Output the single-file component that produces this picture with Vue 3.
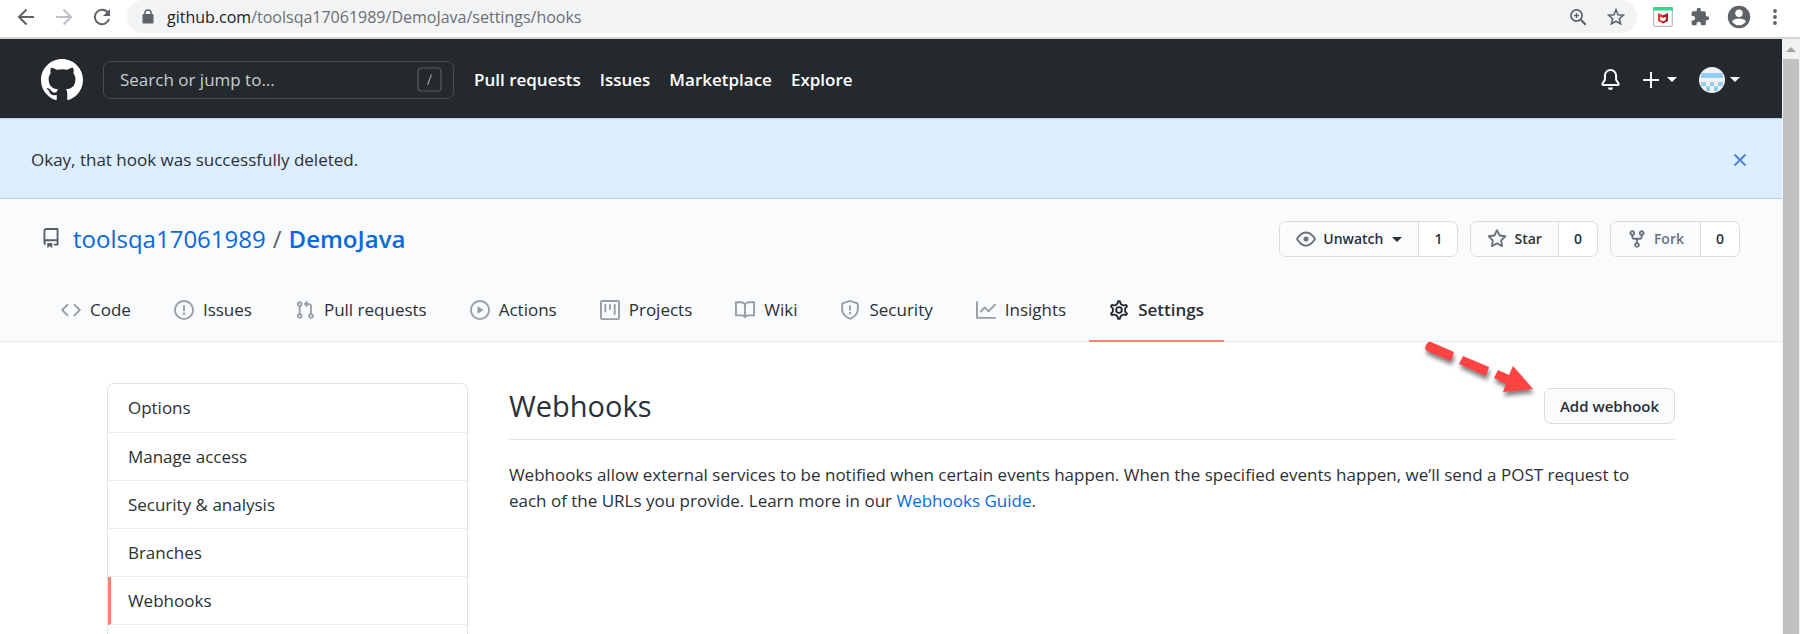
<script setup>
const headerLinks = ['Pull requests', 'Issues', 'Marketplace', 'Explore']

const tabs = [
  { label: 'Code', icon: 'M4.72 3.22a.75.75 0 011.06 1.06L2.06 8l3.72 3.72a.75.75 0 11-1.06 1.06L.47 8.53a.75.75 0 010-1.06l4.25-4.25zm6.56 0a.75.75 0 10-1.06 1.06L13.94 8l-3.72 3.72a.75.75 0 101.06 1.06l4.25-4.25a.75.75 0 000-1.06l-4.25-4.25z' },
  { label: 'Issues', icon: 'M8 1.5a6.5 6.5 0 100 13 6.5 6.5 0 000-13zM0 8a8 8 0 1116 0A8 8 0 010 8zm9 3a1 1 0 11-2 0 1 1 0 012 0zm-.25-6.25a.75.75 0 00-1.5 0v3.5a.75.75 0 001.5 0v-3.5z' },
  { label: 'Pull requests', icon: 'M7.177 3.073L9.573.677A.25.25 0 0110 .854v4.792a.25.25 0 01-.427.177L7.177 3.427a.25.25 0 010-.354zM3.75 2.5a.75.75 0 100 1.5.75.75 0 000-1.5zm-2.25.75a2.25 2.25 0 113 2.122v5.256a2.251 2.251 0 11-1.5 0V5.372A2.25 2.25 0 011.5 3.25zM11 2.5h-1V4h1a1 1 0 011 1v5.628a2.251 2.251 0 101.5 0V5A2.5 2.5 0 0011 2.5zm1 10.25a.75.75 0 111.5 0 .75.75 0 01-1.5 0zM3.75 12a.75.75 0 100 1.5.75.75 0 000-1.5z' },
  { label: 'Actions', icon: 'M1.5 8a6.5 6.5 0 1113 0 6.5 6.5 0 01-13 0zM8 0a8 8 0 100 16A8 8 0 008 0zM6.379 5.227A.25.25 0 006 5.442v5.117a.25.25 0 00.379.214l4.264-2.559a.25.25 0 000-.428L6.379 5.227z' },
  { label: 'Projects', icon: 'M1.75 0A1.75 1.75 0 000 1.75v12.5C0 15.216.784 16 1.75 16h12.5A1.75 1.75 0 0016 14.25V1.75A1.75 1.75 0 0014.25 0H1.75zM1.5 1.75a.25.25 0 01.25-.25h12.5a.25.25 0 01.25.25v12.5a.25.25 0 01-.25.25H1.75a.25.25 0 01-.25-.25V1.75zM11.75 3a.75.75 0 00-.75.75v7.5a.75.75 0 001.5 0v-7.5a.75.75 0 00-.75-.75zm-8.25.75a.75.75 0 011.5 0v5.5a.75.75 0 01-1.5 0v-5.5zM8 3a.75.75 0 00-.75.75v3.5a.75.75 0 001.5 0v-3.5A.75.75 0 008 3z' },
  { label: 'Wiki', icon: 'M0 1.75A.75.75 0 01.75 1h4.253c1.227 0 2.317.59 3 1.501A3.744 3.744 0 0111.006 1h4.245a.75.75 0 01.75.75v10.5a.75.75 0 01-.75.75h-4.507a2.25 2.25 0 00-1.591.659l-.622.621a.75.75 0 01-1.06 0l-.622-.621A2.25 2.25 0 005.258 13H.75a.75.75 0 01-.75-.75V1.75zm8.755 3a2.25 2.25 0 012.25-2.25H14.5v9h-3.757c-.71 0-1.4.201-1.992.572l.004-7.322zm-1.504 7.324l.004-5.073-.002-2.253A2.25 2.25 0 005.003 2.5H1.5v9h3.757a3.75 3.75 0 011.994.574z' },
  { label: 'Security', icon: 'M7.467.133a1.75 1.75 0 011.066 0l5.25 1.68A1.75 1.75 0 0115 3.48V7c0 1.566-.32 3.182-1.303 4.682-.983 1.498-2.585 2.813-5.032 3.855a1.7 1.7 0 01-1.33 0c-2.447-1.042-4.049-2.357-5.032-3.855C1.32 10.182 1 8.566 1 7V3.48a1.75 1.75 0 011.217-1.667l5.25-1.68zm.61 1.429a.25.25 0 00-.153 0l-5.25 1.68a.25.25 0 00-.174.238V7c0 1.358.275 2.666 1.057 3.86.784 1.194 2.121 2.34 4.366 3.297a.2.2 0 00.154 0c2.245-.956 3.582-2.104 4.366-3.298C13.225 9.666 13.5 8.36 13.5 7V3.48a.25.25 0 00-.174-.237l-5.25-1.68zM9 10.5a1 1 0 11-2 0 1 1 0 012 0zm-.25-5.75a.75.75 0 10-1.5 0v3a.75.75 0 001.5 0v-3z' },
  { label: 'Insights', icon: 'M1.5 1.75a.75.75 0 00-1.5 0v12.5c0 .414.336.75.75.75h14.5a.75.75 0 000-1.5H1.5V1.75zm14.28 2.53a.75.75 0 00-1.06-1.06L10 7.94 7.53 5.47a.75.75 0 00-1.06 0L3.22 8.72a.75.75 0 001.06 1.06L7 7.06l2.47 2.47a.75.75 0 001.06 0l5.25-5.25z' },
  { label: 'Settings', active: true },
]

const counters = [
  { label: 'Unwatch', count: 1, caret: true, icon: 'M1.679 7.932c.412-.621 1.242-1.75 2.366-2.717C5.175 4.242 6.527 3.5 8 3.5c1.473 0 2.824.742 3.955 1.715 1.124.967 1.954 2.096 2.366 2.717a.119.119 0 010 .136c-.412.621-1.242 1.75-2.366 2.717C10.825 11.758 9.473 12.5 8 12.5c-1.473 0-2.824-.742-3.955-1.715C2.92 9.818 2.09 8.69 1.679 8.068a.119.119 0 010-.136zM8 2c-1.981 0-3.67.992-4.933 2.078C1.797 5.169.88 6.423.43 7.1a1.619 1.619 0 000 1.798c.45.678 1.367 1.932 2.637 3.024C4.329 13.008 6.019 14 8 14c1.981 0 3.67-.992 4.933-2.078 1.27-1.091 2.187-2.345 2.637-3.023a1.619 1.619 0 000-1.798c-.45-.678-1.367-1.932-2.637-3.023C11.671 2.992 9.981 2 8 2zm0 8a2 2 0 100-4 2 2 0 000 4z' },
  { label: 'Star', count: 0, icon: 'M8 .25a.75.75 0 01.673.418l1.882 3.815 4.21.612a.75.75 0 01.416 1.279l-3.046 2.97.719 4.192a.75.75 0 01-1.088.791L8 12.347l-3.766 1.98a.75.75 0 01-1.088-.79l.72-4.194L.818 6.374a.75.75 0 01.416-1.28l4.21-.611L7.327.668A.75.75 0 018 .25zm0 2.445L6.615 5.5a.75.75 0 01-.564.41l-3.097.45 2.24 2.184a.75.75 0 01.216.664l-.528 3.084 2.769-1.456a.75.75 0 01.698 0l2.77 1.456-.53-3.084a.75.75 0 01.216-.664l2.24-2.183-3.096-.45a.75.75 0 01-.564-.41L8 2.694z' },
  { label: 'Fork', count: 0, muted: true, icon: 'M5 3.25a.75.75 0 11-1.5 0 .75.75 0 011.5 0zm0 2.122a2.25 2.25 0 10-1.5 0v.878A2.25 2.25 0 005.75 8.5h1.5v2.128a2.251 2.251 0 101.5 0V8.5h1.5a2.25 2.25 0 002.25-2.25v-.878a2.25 2.25 0 10-1.5 0v.878a.75.75 0 01-.75.75h-4.5A.75.75 0 015 6.25v-.878zm3.75 7.378a.75.75 0 11-1.5 0 .75.75 0 011.5 0zm3-8.75a.75.75 0 100-1.5.75.75 0 000 1.5z' },
]

const menu = ['Options', 'Manage access', 'Security & analysis', 'Branches', 'Webhooks']
</script>

<template>
  <div class="window">
    <div class="toolbar">
      <div class="history">
        <button class="tool" aria-label="Back">
          <svg width="18" height="18" viewBox="0 0 18 18" fill="none" stroke="#5f6368" stroke-width="2"><path d="M17 9H2.500M9.500 1.500L2 9l7.500 7.500" /></svg>
        </button>
        <button class="tool" aria-label="Forward">
          <svg width="18" height="18" viewBox="0 0 18 18" fill="none" stroke="#bdc1c6" stroke-width="2"><path d="M1 9h14.500M8.500 1.500L16 9l-7.500 7.500" /></svg>
        </button>
        <button class="tool" aria-label="Reload">
          <svg width="18" height="18" viewBox="0 0 18 18"><path d="M14.800 4.700A7.200 7.200 0 1 0 16 11" fill="none" stroke="#5f6368" stroke-width="2" /><path d="M17 1v7h-7z" fill="#5f6368" /></svg>
        </button>
      </div>
      <div class="address">
        <svg width="12" height="16" viewBox="0 0 12 16"><rect x="0.500" y="5" width="11" height="9.500" rx="1.200" fill="#5f6368" /><path d="M3 6V4a3 3 0 0 1 6 0v2" fill="none" stroke="#5f6368" stroke-width="1.500" /></svg>
        <span class="url"><span class="host">github.com</span>/toolsqa17061989/DemoJava/settings/hooks</span>
        <button class="tool" aria-label="Zoom">
          <svg width="18" height="18" viewBox="0 0 18 18" fill="none" stroke="#5f6368"><circle cx="7.500" cy="7.500" r="5.600" stroke-width="1.700" /><path d="M11.700 11.700l5 5" stroke-width="2.200" /><path d="M7.500 5v5M5 7.500h5" stroke-width="1.300" /></svg>
        </button>
        <button class="tool" aria-label="Bookmark">
          <svg width="18" height="18" viewBox="0 0 18 18" fill="none" stroke="#5f6368" stroke-width="1.600"><path d="M9 1.800l2.100 4.900 5.300.5-4 3.500 1.200 5.200L9 13.200l-4.600 2.700 1.200-5.200-4-3.500 5.300-.5z" /></svg>
        </button>
      </div>
      <button class="tool" aria-label="WebAdvisor">
        <svg width="20" height="20" viewBox="0 0 20 20"><rect x="0.700" y="0.700" width="18.600" height="18.600" rx="1.500" fill="#fff" stroke="#b4b7ba" stroke-width="1.200" /><path d="M0 1.200Q0 0 1.200 0h17.600Q20 0 20 1.200V3.500H0z" fill="#35d88a" /><path d="M5 6l5 2.300V11L7.200 9.700v3.200L10 14.300v2.200l-5-2.400z" fill="#e33a31" /><path d="M15 6l-5 2.300V11l2.800-1.300v3.200L10 14.300v2.200l5-2.400z" fill="#a31f24" /></svg>
      </button>
      <button class="tool" aria-label="Extensions">
        <svg width="20" height="20" viewBox="0 0 24 24" fill="#5f6368"><path d="M20.500 11H19V7c0-1.100-.9-2-2-2h-4V3.500a2.500 2.500 0 0 0-5 0V5H4c-1.100 0-2 .9-2 2v3.800h1.500a2.700 2.700 0 0 1 0 5.400H2V20c0 1.100.9 2 2 2h3.800v-1.500a2.700 2.700 0 0 1 5.400 0V22H17c1.100 0 2-.9 2-2v-4h1.500a2.500 2.500 0 0 0 0-5z" /></svg>
      </button>
      <button class="tool" aria-label="Profile">
        <svg width="24" height="24" viewBox="0 0 24 24"><circle cx="12" cy="12" r="11.200" fill="#5f6368" /><circle cx="12" cy="8.300" r="3.700" fill="#fff" /><path d="M5 16.400c1.400-2.100 4.400-2.900 7-2.900s5.600.8 7 2.900c-1.500 2.400-4.100 3.900-7 3.900s-5.500-1.500-7-3.900z" fill="#fff" /></svg>
      </button>
      <button class="tool more" aria-label="Menu">
        <svg width="6" height="18" viewBox="0 0 6 18" fill="#5f6368"><circle cx="3" cy="3" r="1.900" /><circle cx="3" cy="9" r="1.900" /><circle cx="3" cy="15" r="1.900" /></svg>
      </button>
    </div>

    <div class="viewport">
      <div class="page">
        <header class="header">
          <a class="logo" href="#" aria-label="Homepage">
            <svg width="42" height="42" viewBox="0 0 16 16" fill="#fff"><path d="M8 0C3.580 0 0 3.580 0 8c0 3.540 2.290 6.530 5.470 7.590.4.070.55-.17.55-.38 0-.19-.01-.82-.01-1.490-2.010.37-2.530-.49-2.690-.94-.09-.23-.48-.94-.82-1.130-.28-.15-.68-.52-.01-.53.63-.01 1.080.58 1.230.82.72 1.210 1.870.87 2.330.66.070-.52.28-.87.51-1.070-1.780-.2-3.640-.89-3.640-3.950 0-.87.31-1.590.82-2.150-.08-.2-.36-1.020.08-2.120 0 0 .67-.21 2.200.82.64-.18 1.320-.27 2-.27s1.360.09 2 .27c1.530-1.040 2.200-.82 2.200-.82.44 1.100.16 1.920.08 2.120.51.56.82 1.270.82 2.150 0 3.070-1.870 3.750-3.650 3.950.29.25.54.73.54 1.480 0 1.070-.01 1.930-.01 2.200 0 .21.15.46.55.38A8.013 8.013 0 0 0 16 8c0-4.420-3.580-8-8-8z" /></svg>
          </a>
          <div class="search">
            <input type="text" placeholder="Search or jump to..." aria-label="Search or jump to" />
            <svg width="25" height="25" viewBox="0 0 25 25" fill="none" stroke="#6a737d" stroke-width="1.200"><rect x="1" y="1" width="23" height="23" rx="3.500" stroke-opacity=".7" /><path d="M14.500 7.500l-4 10.500" stroke="#959da5" /></svg>
          </div>
          <nav class="links">
            <a v-for="l in headerLinks" :key="l" href="#">{{ l }}</a>
          </nav>
          <button class="icon-button" aria-label="Notifications">
            <svg width="21" height="21" viewBox="0 0 16 16" fill="#fff"><path d="M8 16a2 2 0 001.985-1.750c.017-.137-.097-.25-.235-.25h-3.500c-.138 0-.252.113-.235.250A2 2 0 008 16z" /><path fill-rule="evenodd" d="M8 1.500A3.500 3.500 0 004.500 5v2.947c0 .346-.102.683-.294.970l-1.703 2.556a.018.018 0 00-.003.010l.001.006c0 .002.002.004.004.006a.017.017 0 00.006.004l.007.001h10.964l.007-.001a.016.016 0 00.006-.004.016.016 0 00.004-.006l.001-.007a.017.017 0 00-.003-.010l-1.703-2.554a1.750 1.750 0 01-.294-.970V5A3.500 3.500 0 008 1.500zM3 5a5 5 0 0110 0v2.947c0 .050.015.098.042.139l1.703 2.555A1.518 1.518 0 0113.482 13H2.518a1.518 1.518 0 01-1.263-2.360l1.703-2.554A.25.25 0 003 7.947V5z" /></svg>
          </button>
          <button class="icon-button" aria-label="Create new">
            <svg width="16" height="16" viewBox="0 0 16 16" stroke="#fff" stroke-width="1.900"><path d="M8 0v16M0 8h16" /></svg>
            <i class="caret"></i>
          </button>
          <button class="icon-button account" aria-label="Account">
            <svg width="26" height="26" viewBox="0 0 26 26">
              <clipPath id="round"><circle cx="13" cy="13" r="13" /></clipPath>
              <g clip-path="url(#round)">
                <path fill="#f0f0f0" d="M0 0h26v26H0z" />
                <path fill="#99cdf3" d="M2 6h22v5H2zM2 15h5v4H2zM11 15h4v4h-4zM19 15h5v4h-5zM7 19h4v5H7zM15 19h4v5h-4z" />
                <path d="M4 9.200h18" stroke="#55d4b8" stroke-width="1" stroke-dasharray="1 1.500" />
                <path fill="#45d9a8" d="M8 21h2v1H8zM16 21h2v1h-2z" />
              </g>
            </svg>
            <i class="caret"></i>
          </button>
        </header>

        <div class="flash">
          <span>Okay, that hook was successfully deleted.</span>
          <button aria-label="Dismiss">
            <svg width="14" height="14" viewBox="0 0 14 14" stroke="#4f81cf" stroke-width="1.900" stroke-linecap="round"><path d="M2 2l10 10M12 2L2 12" /></svg>
          </button>
        </div>

        <div class="pagehead">
          <div class="repo">
            <svg class="book" width="20" height="20" viewBox="0 0 16 16" fill="#57606a"><path fill-rule="evenodd" d="M2 2.500A2.500 2.500 0 014.500 0h8.750a.75.75 0 01.75.75v12.500a.75.75 0 01-.75.75h-2.500a.75.75 0 110-1.500h1.750v-2h-8a1 1 0 00-.714 1.700.75.75 0 01-1.072 1.050A2.495 2.495 0 012 11.500v-9zm10.500-1V9h-8c-.356 0-.694.074-1 .208V2.500a1 1 0 011-1h8zM5 12.250v3.250a.25.25 0 00.4.2l1.450-1.087a.25.25 0 01.3 0L8.600 15.700a.25.25 0 00.4-.2v-3.250a.25.25 0 00-.25-.25h-3.500a.25.25 0 00-.25.25z" /></svg>
            <h1><a href="#">toolsqa17061989</a><span>/</span><a class="name" href="#">DemoJava</a></h1>
            <ul class="counters">
              <li v-for="c in counters" :key="c.label">
                <button :class="{ muted: c.muted }">
                  <svg width="20" height="20" viewBox="0 0 16 16"><path fill-rule="evenodd" :d="c.icon" /></svg>
                  <span>{{ c.label }}</span>
                  <i v-if="c.caret" class="caret"></i>
                </button>
                <a href="#">{{ c.count }}</a>
              </li>
            </ul>
          </div>
          <nav class="tabs">
            <a v-for="t in tabs" :key="t.label" href="#" :class="{ active: t.active }">
              <svg v-if="t.icon" width="20" height="20" viewBox="0 0 16 16"><path fill-rule="evenodd" :d="t.icon" /></svg>
              <svg v-else class="gear" width="20" height="20" viewBox="0.6 0.6 14.8 14.8">
                <path d="M7.429 1.525a6.593 6.593 0 011.142 0c.036.003.108.036.137.146l.289 1.105c.147.56.55.967.997 1.189.174.086.341.183.501.29.417.278.97.423 1.53.27l1.102-.303c.11-.03.175.016.195.046.219.31.41.641.573.989.014.031.022.11-.059.19l-.815.806c-.411.406-.562.957-.53 1.456a4.588 4.588 0 010 .582c-.032.499.119 1.05.53 1.456l.815.806c.08.08.073.159.059.19a6.494 6.494 0 01-.573.99c-.02.029-.086.074-.195.045l-1.103-.303c-.559-.153-1.112-.008-1.529.27-.16.107-.327.204-.5.29-.449.222-.851.628-.998 1.189l-.289 1.105c-.029.11-.101.143-.137.146a6.613 6.613 0 01-1.142 0c-.036-.003-.108-.037-.137-.146l-.289-1.105c-.147-.56-.55-.967-.997-1.189a4.502 4.502 0 01-.501-.29c-.417-.278-.97-.423-1.53-.27l-1.102.303c-.11.03-.175-.016-.195-.046a6.492 6.492 0 01-.573-.989c-.014-.031-.022-.11.059-.19l.815-.806c.411-.406.562-.957.53-1.456a4.587 4.587 0 010-.582c.032-.499-.119-1.05-.53-1.456l-.815-.806c-.08-.08-.073-.159-.059-.19a6.44 6.44 0 01.573-.99c.02-.029.086-.075.195-.045l1.103.303c.559.153 1.112.008 1.529-.27.16-.107.327-.204.5-.29.449-.222.851-.628.998-1.189l.289-1.105c.029-.11.101-.143.137-.146z" />
                <circle cx="8" cy="8" r="2.100" />
              </svg>
              <span>{{ t.label }}</span>
            </a>
          </nav>
        </div>

        <div class="content">
          <nav class="menu" aria-label="Repository settings">
            <a v-for="m in menu" :key="m" href="#" :class="{ current: m === 'Webhooks' }">{{ m }}</a>
          </nav>
          <main>
            <div class="subhead">
              <h2>Webhooks</h2>
              <button>Add webhook</button>
              <svg class="pointer" width="120" height="64" viewBox="0 0 120 64" fill="#ff4342">
                <path d="M10 6L33 16l-3 9L6 15Q3 13 5 9t5-3zM42 20l26 11-3 9-27-12zM77 34l11 5 4-9 20 23-30 3 3-8-12-6z" />
              </svg>
            </div>
            <p>Webhooks allow external services to be notified when certain events happen. When the specified events happen, we’ll send a POST request to each of the URLs you provide. Learn more in our <a href="#">Webhooks Guide</a>.</p>
          </main>
        </div>
      </div>
      <div class="scrollbar" aria-hidden="true">
        <svg width="18" height="20" viewBox="0 0 18 20"><path d="M9 8l5 5H4z" fill="#a3a3a3" /></svg>
        <div class="thumb"></div>
      </div>
    </div>
  </div>
</template>

<style>
body { margin: 0; }
</style>

<style scoped>
* { box-sizing: border-box; }
.window {
  height: 100vh;
  display: flex;
  flex-direction: column;
  overflow: hidden;
  background: #fff;
  color: #2b3036;
  font-family: "Open Sans", "Noto Sans", sans-serif;
  font-size: 17px;
  line-height: 26px;
}
svg { display: block; flex: none; }
a { color: inherit; text-decoration: none; }
button { font: inherit; color: inherit; background: none; border: 0; padding: 0; margin: 0; }
h1, h2, p, ul { margin: 0; padding: 0; }

.toolbar {
  flex: none;
  height: 39px;
  padding: 0 22px 4px 17px;
  border-bottom: 2px solid #d3d5d8;
  display: flex;
  align-items: center;
  gap: 17px;
}
.history { display: flex; gap: 20px; }
.tool { flex: none; }
.more { padding-left: 4px; }
.address {
  flex: 1;
  height: 33px;
  margin: 0 -1px;
  padding: 0 12px 0 15px;
  border-radius: 16px;
  background: #f1f3f4;
  display: flex;
  align-items: center;
  gap: 20px;
}
.url { flex: 1; margin-left: -7px; font-size: 16px; color: #6b6f73; white-space: nowrap; }
.host { color: #202124; }

.viewport { flex: 1; min-height: 0; display: flex; }
.page { flex: 1; min-width: 0; display: flex; flex-direction: column; }
.scrollbar { width: 18px; flex: none; background: #f1f1f1; display: flex; flex-direction: column; align-items: center; }
.thumb { flex: 1; width: 16px; background: #c1c1c1; }

.header {
  flex: none;
  height: 79px;
  padding: 2px 42px 0 41px;
  background: #24292e;
  color: #fff;
  display: flex;
  align-items: center;
}
.search {
  width: 351px;
  height: 38px;
  margin: 0 20px;
  padding: 0 11px 0 16px;
  border: 1px solid #444d56;
  border-radius: 7px;
  display: flex;
  align-items: center;
}
.search input { flex: 1; min-width: 0; padding: 0; border: 0; outline: 0; background: none; font: inherit; color: #c8ccd0; }
.search input::placeholder { color: #c8ccd0; opacity: 1; }
.links { flex: 1; display: flex; gap: 19px; font-weight: 600; white-space: nowrap; }
.icon-button { display: flex; align-items: center; gap: 8px; margin-left: 22px; }
.icon-button.account { gap: 5px; }
.caret { width: 0; height: 0; border: 5px solid transparent; border-top-color: currentColor; border-bottom: 0; }

.flash {
  flex: none;
  height: 81px;
  padding: 2px 35px 0 31px;
  border-top: 1px solid #b4d3f3;
  border-bottom: 1px solid #b4d3f3;
  background: #dbedff;
  display: flex;
  align-items: center;
  justify-content: space-between;
}

.pagehead { flex: none; background: #fafbfc; border-bottom: 1px solid #e6e9ec; }
.repo { height: 80px; padding: 0 42px 0 41px; display: flex; align-items: center; gap: 12px; }
.book { margin-bottom: 2px; }
h1 { flex: 1; font-size: 24px; font-weight: 400; line-height: 36px; white-space: nowrap; color: #586069; }
h1 a { color: #0969da; }
h1 span { margin: 0 7px; }
h1 .name { font-weight: 600; }
.counters { display: flex; gap: 12px; list-style: none; font-size: 14px; font-weight: 600; }
.counters li {
  display: flex;
  height: 36px;
  border: 1px solid #d9dcdf;
  border-radius: 7px;
  overflow: hidden;
  background: #fff;
}
.counters button { display: flex; align-items: center; gap: 7px; padding: 0 16px; background: #fafbfc; }
.counters svg { fill: #6a737d; }
.counters .caret { margin-left: 2px; }
.counters .muted { color: #6a737d; }
.counters a { padding: 0 15px; border-left: 1px solid #d9dcdf; line-height: 34px; }

.tabs { display: flex; gap: 3px; padding: 0 41px; margin-bottom: -1px; white-space: nowrap; }
.tabs a { display: flex; align-items: center; gap: 9px; height: 63px; padding: 0 20px; border-bottom: 2px solid transparent; }
.tabs svg { fill: #959da5; }
.tabs .active { font-weight: 600; border-color: #f9826c; }
.tabs .gear { fill: none; stroke: #24292e; stroke-width: 1.4; }

.content { flex: 1; min-height: 0; width: 88%; margin: 0 auto; display: flex; gap: 41px; padding-top: 41px; }
.menu { flex: none; width: 361px; border: 1px solid #e1e4e8; border-bottom: 0; border-radius: 7px 7px 0 0; }
.menu a { display: block; height: 48px; padding: 0 20px; line-height: 48px; border-bottom: 1px solid #eaecef; }
.menu a:first-child { height: 49px; }
.menu .current { border-left: 3px solid #f9826c; padding-left: 17px; }
main { flex: 1; min-width: 0; }
.subhead { position: relative; display: flex; align-items: center; justify-content: space-between; height: 57px; padding-bottom: 10px; border-bottom: 1px solid #e1e4e8; }
h2 { font-size: 29px; font-weight: 400; line-height: 40px; }
.subhead button { height: 36px; padding: 0 15px; border: 1px solid #d9dcdf; border-radius: 7px; background: #fafbfc; font-size: 15px; font-weight: 600; line-height: 34px; }
.pointer { position: absolute; right: 134px; top: -47px; filter: drop-shadow(1px 4px 2px rgba(0, 0, 0, 0.5)); }
main p { margin-top: 22px; padding-right: 24px; }
main p a { color: #0969da; }
</style>
